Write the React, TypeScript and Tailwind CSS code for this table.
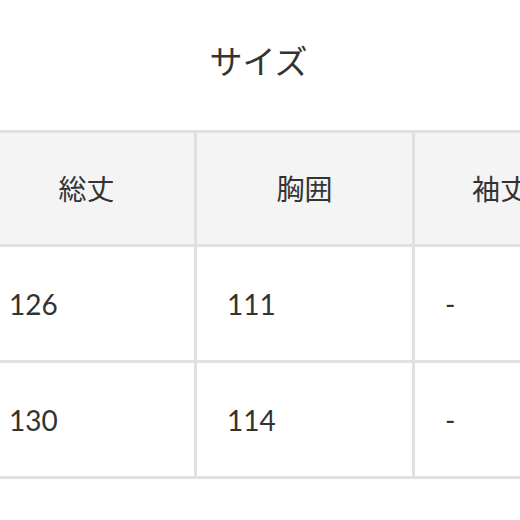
import React from 'react';

const headers = ['総丈', '胸囲', '袖丈'];
const rows = [
  ['126', '111', '-'],
  ['130', '114', '-'],
];

export default function App() {
  return (
    <div
      className="w-[520px] h-[520px] overflow-hidden bg-white text-[#333333]"
      style={{ fontFamily: 'Lato, "Noto Sans CJK JP", sans-serif' }}
    >
      {/* Title */}
      <div className="h-[130px] pt-[40px] text-center">
        <h2 className="text-[33px] leading-[42px] font-normal ml-[-3px]">サイズ</h2>
      </div>

      {/* Size table */}
      <div className="ml-[-24px] w-max grid grid-cols-[215px_215px_170px] gap-[3px] p-[3px] bg-[#e0e0e0]">
        {headers.map((h) => (
          <div key={h} className="h-[111px] bg-[#f4f4f4] flex items-center justify-center text-[28px]">
            {h}
          </div>
        ))}
        {rows.map((row, i) =>
          row.map((cell, j) => (
            <div
              key={`${i}-${j}`}
              className="h-[113px] bg-white flex items-center pl-[30px] text-[28px]"
            >
              {cell}
            </div>
          ))
        )}
      </div>
    </div>
  );
}
